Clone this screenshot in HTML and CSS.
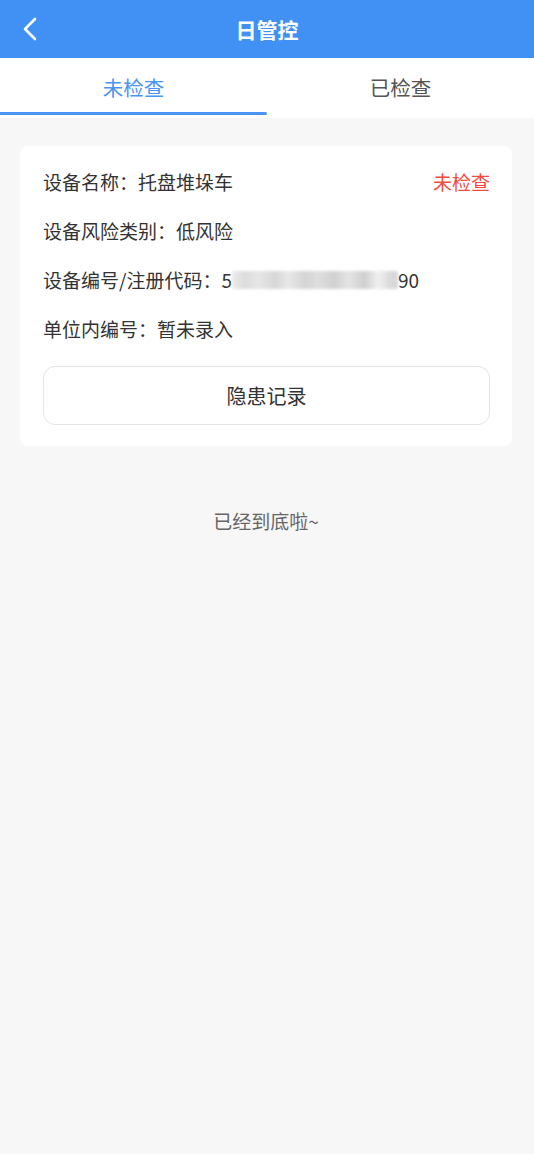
FILE: index.html
```html
<!DOCTYPE html>
<html lang="zh-CN">
<head>
  <meta charset="UTF-8">
  <meta name="viewport" content="width=device-width, initial-scale=1.0">
  <title>日管控</title>
  <link rel="stylesheet" href="styles.css">
</head>
<body>
  <header class="topbar">
    <a class="back" href="#">
      <svg width="16" height="24" viewBox="0 0 16 24"><path d="M13 2 L3 12 L13 22" fill="none" stroke="#fff" stroke-width="2.6" stroke-linecap="round" stroke-linejoin="round"/></svg>
    </a>
    <h1 class="title">日管控</h1>
  </header>

  <nav class="tabs">
    <div class="tab active">未检查</div>
    <div class="tab">已检查</div>
  </nav>

  <main class="list">
    <section class="card">
      <div class="row">
        <span>设备名称：托盘堆垛车</span>
        <span class="status">未检查</span>
      </div>
      <div class="row">设备风险类别：低风险</div>
      <div class="row">设备编号/注册代码：5<span class="mask"></span>90</div>
      <div class="row">单位内编号：暂未录入</div>
      <button class="record-btn">隐患记录</button>
    </section>

    <p class="end">已经到底啦~</p>
  </main>
</body>
</html>
```

FILE: styles.css
```css
/* Reset & Base */
* {
  margin: 0;
  padding: 0;
  box-sizing: border-box;
}

body {
  font-family: "Noto Sans CJK SC", "Noto Sans", sans-serif;
  background: #f7f7f7;
  color: #333;
  min-height: 100vh;
}

/* Top bar */
.topbar {
  height: 58px;
  background: #4191f5;
  display: flex;
  align-items: center;
  justify-content: center;
  position: relative;
}

.back {
  position: absolute;
  left: 22px;
  top: 17px;
  display: block;
  width: 16px;
  height: 24px;
}

.title {
  color: #fff;
  font-size: 21px;
  font-weight: bold;
}

/* Tabs */
.tabs {
  display: flex;
  background: #fff;
  height: 60px;
}

.tab {
  flex: 1;
  display: flex;
  align-items: center;
  justify-content: center;
  font-size: 20.5px;
  color: #555;
  position: relative;
  padding-bottom: 2px;
}

.tab.active {
  color: #4a94f5;
}

.tab.active::after {
  content: "";
  position: absolute;
  left: 0;
  right: 0;
  bottom: 3px;
  height: 3px;
  background: #4a94f5;
  border-radius: 0 2px 2px 0;
}

/* List */
.list {
  padding: 28px 22px 0 20px;
}

.card {
  background: #fff;
  border-radius: 8px;
  padding: 20px 22px 21px 23px;
}

.row {
  font-size: 19px;
  line-height: 32px;
  height: 49px;
  display: flex;
  align-items: flex-start;
  justify-content: space-between;
}

.row:nth-child(3) {
  justify-content: flex-start;
}

.status {
  color: #f04b3b;
}

.mask {
  display: inline-block;
  width: 166px;
  height: 18px;
  margin-top: 7px;
  background: linear-gradient(90deg, #eaeaea 0%, #dcdcdc 8%, #e6e6e6 16%, #d6d6d6 26%, #e8e8e8 34%, #d4d4d4 44%, #dedede 52%, #d0d0d0 62%, #e4e4e4 70%, #cfcfcf 80%, #f0f0f0 88%, #d8d8d8 96%);
  filter: blur(1.5px);
}

.record-btn {
  display: block;
  width: 100%;
  height: 59px;
  margin-top: 4px;
  border: 1px solid #e4e4e4;
  border-radius: 12px;
  background: #fff;
  font-family: inherit;
  font-size: 20px;
  color: #333;
}

.end {
  text-align: center;
  margin-top: 61px;
  font-size: 19px;
  color: #666;
}
```
